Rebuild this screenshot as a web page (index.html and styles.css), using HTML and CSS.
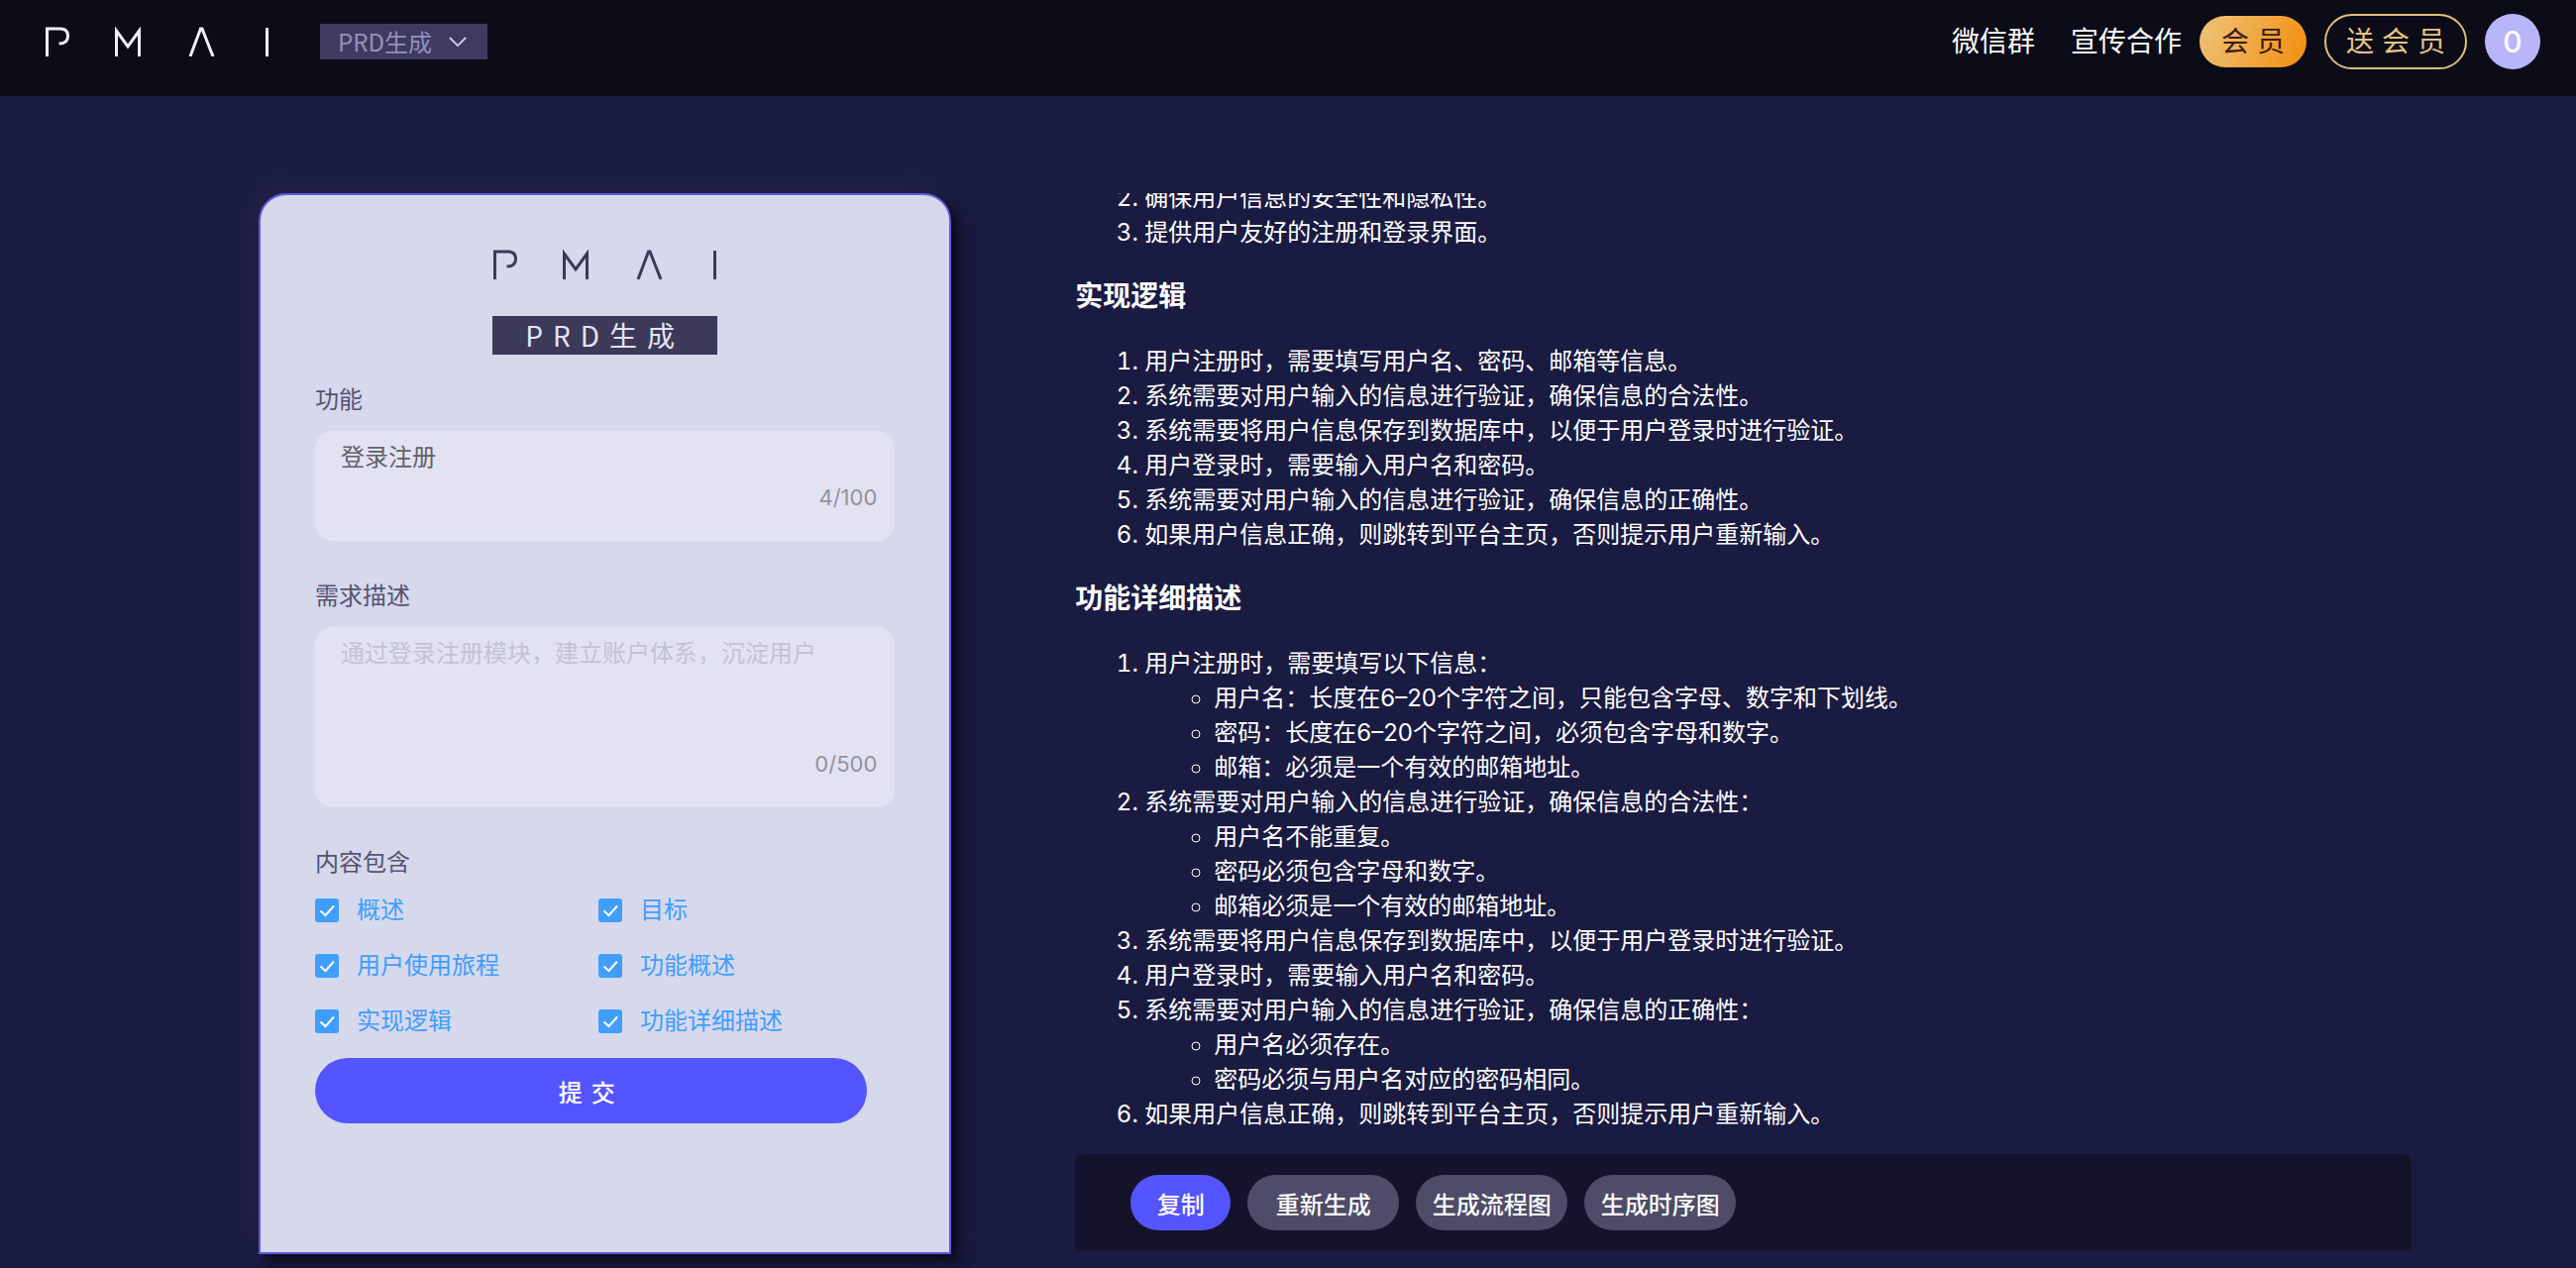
FILE: index.html
```html
<!DOCTYPE html>
<html lang="zh-CN">
<head>
<meta charset="utf-8">
<meta name="viewport" content="width=device-width, initial-scale=1">
<title>PMAI - PRD生成</title>
<link rel="stylesheet" href="styles.css">
</head>
<body>
<svg class="sprite" aria-hidden="true">
  <symbol id="logo" viewBox="0 0 226 30">
    <path d="M1.500 30V2H15C20 2 22.500 5 22.500 9.500C22.500 14.500 20 17 13.500 17M71.500 30V4L83 20L94.500 4V30M146 30L156.500 2H158L169 30M223.500 1V30" fill="none" stroke="currentColor" stroke-width="3"/>
  </symbol>
  <symbol id="tick" viewBox="0 0 24 24">
    <path d="M5.500 12.500L10.500 17L19 7.500" fill="none" stroke="currentColor" stroke-width="2"/>
  </symbol>
</svg>

<header class="topbar">
  <a class="brand" href="#" aria-label="PMAI"><svg class="logo"><use href="#logo"/></svg></a>
  <div class="mode">
    <select class="mode-select" aria-label="功能切换"><option>PRD生成</option></select>
    <svg class="mode-arrow" viewBox="0 0 20 12" aria-hidden="true"><path d="M1 1L10 10L19 1" fill="none" stroke="currentColor" stroke-width="2"/></svg>
  </div>
  <nav class="links">
    <a href="#">微信群</a>
    <a href="#">宣传合作</a>
  </nav>
  <button class="vip" type="button">会员</button>
  <button class="vip vip-gift" type="button">送会员</button>
  <button class="avatar" type="button">0</button>
</header>

<main class="workspace">
  <form class="card">
    <svg class="logo card-logo" role="img" aria-label="PMAI"><use href="#logo"/></svg>
    <h1 class="badge">PRD生成</h1>

    <label class="label" for="feature">功能</label>
    <div class="field">
      <textarea class="input" id="feature" maxlength="100">登录注册</textarea>
      <span class="counter">4/100</span>
    </div>

    <label class="label" for="need">需求描述</label>
    <div class="field field-tall">
      <textarea class="input" id="need" maxlength="500" placeholder="通过登录注册模块，建立账户体系，沉淀用户"></textarea>
      <span class="counter">0/500</span>
    </div>

    <fieldset class="options">
      <legend class="label">内容包含</legend>
      <div class="option-grid">
        <label class="option"><input type="checkbox" checked><svg><use href="#tick"/></svg><span>概述</span></label>
        <label class="option"><input type="checkbox" checked><svg><use href="#tick"/></svg><span>目标</span></label>
        <label class="option"><input type="checkbox" checked><svg><use href="#tick"/></svg><span>用户使用旅程</span></label>
        <label class="option"><input type="checkbox" checked><svg><use href="#tick"/></svg><span>功能概述</span></label>
        <label class="option"><input type="checkbox" checked><svg><use href="#tick"/></svg><span>实现逻辑</span></label>
        <label class="option"><input type="checkbox" checked><svg><use href="#tick"/></svg><span>功能详细描述</span></label>
      </div>
    </fieldset>
    <button class="submit" type="button">提交</button>
  </form>

  <section class="result">
    <article class="doc">
      <ol start="2">
        <li>确保用户信息的安全性和隐私性。</li>
        <li>提供用户友好的注册和登录界面。</li>
      </ol>
      <h2>实现逻辑</h2>
      <ol>
        <li>用户注册时，需要填写用户名、密码、邮箱等信息。</li>
        <li>系统需要对用户输入的信息进行验证，确保信息的合法性。</li>
        <li>系统需要将用户信息保存到数据库中，以便于用户登录时进行验证。</li>
        <li>用户登录时，需要输入用户名和密码。</li>
        <li>系统需要对用户输入的信息进行验证，确保信息的正确性。</li>
        <li>如果用户信息正确，则跳转到平台主页，否则提示用户重新输入。</li>
      </ol>
      <h2>功能详细描述</h2>
      <ol>
        <li>用户注册时，需要填写以下信息：
          <ul>
            <li>用户名：长度在6–20个字符之间，只能包含字母、数字和下划线。</li>
            <li>密码：长度在6–20个字符之间，必须包含字母和数字。</li>
            <li>邮箱：必须是一个有效的邮箱地址。</li>
          </ul>
        </li>
        <li>系统需要对用户输入的信息进行验证，确保信息的合法性：
          <ul>
            <li>用户名不能重复。</li>
            <li>密码必须包含字母和数字。</li>
            <li>邮箱必须是一个有效的邮箱地址。</li>
          </ul>
        </li>
        <li>系统需要将用户信息保存到数据库中，以便于用户登录时进行验证。</li>
        <li>用户登录时，需要输入用户名和密码。</li>
        <li>系统需要对用户输入的信息进行验证，确保信息的正确性：
          <ul>
            <li>用户名必须存在。</li>
            <li>密码必须与用户名对应的密码相同。</li>
          </ul>
        </li>
        <li>如果用户信息正确，则跳转到平台主页，否则提示用户重新输入。</li>
      </ol>
    </article>
    <div class="actions">
      <button class="action action-primary" type="button">复制</button>
      <button class="action" type="button">重新生成</button>
      <button class="action" type="button">生成流程图</button>
      <button class="action" type="button">生成时序图</button>
    </div>
  </section>
</main>
</body>
</html>
```

FILE: styles.css
```css
* {
  box-sizing: border-box;
}

body {
  margin: 0;
  height: 100vh;
  display: flex;
  flex-direction: column;
  background: #1a1b41;
  color: #fff;
  font-family: Inter, "Noto Sans CJK SC", sans-serif;
  font-size: 24px;
  overflow: hidden;
}

button,
select,
textarea {
  font: inherit;
  color: inherit;
  border: 0;
  margin: 0;
}

button {
  cursor: pointer;
  white-space: nowrap;
}

.sprite {
  position: absolute;
  width: 0;
  height: 0;
}

.logo {
  display: block;
  width: 226px;
  height: 30px;
}

/* top bar */

.topbar {
  flex: none;
  display: flex;
  align-items: center;
  gap: 18px;
  height: 97px;
  padding: 0 36px 13px 46px;
  background: #0c0b18;
}

.brand {
  color: #f0effc;
}

.mode {
  display: grid;
  align-items: center;
  margin-left: 33px;
  color: #9590bd;
}

.mode-select {
  grid-area: 1 / 1;
  appearance: none;
  width: 169px;
  height: 36px;
  padding: 0 18px;
  border-radius: 0;
  background: #3f3b5e;
  font-family: "Noto Sans CJK SC", sans-serif;
  line-height: 36px;
}

.mode-arrow {
  grid-area: 1 / 1;
  justify-self: end;
  width: 18px;
  height: 11px;
  margin-right: 21px;
  color: #d3d0ee;
  pointer-events: none;
}

.links {
  display: flex;
  gap: 36px;
  margin-left: auto;
  font-size: 28px;
  line-height: 40px;
}

.links a {
  color: #fff;
  text-decoration: none;
}

.vip {
  height: 52px;
  padding: 0 14px 0 22px;
  border-radius: 28px;
  background: linear-gradient(110deg, #edc47a, #f38d0e);
  color: #3b1a14;
  font-size: 28px;
  line-height: 40px;
  letter-spacing: 8px;
}

.vip-gift {
  height: 56px;
  padding: 0 12px 0 20px;
  border: 2px solid #dcc07c;
  background: none;
  color: #e3c583;
}

.avatar {
  width: 56px;
  height: 56px;
  padding: 0;
  border-radius: 50%;
  background: #b9b5fb;
  font-size: 30px;
  font-weight: 500;
  line-height: 40px;
}

/* two columns: form and result */

.workspace {
  flex: 1;
  min-height: 0;
  display: grid;
  grid-template-columns: minmax(0, 14fr) minmax(0, 27fr);
  grid-template-rows: minmax(0, 1fr);
  column-gap: 125px;
  padding: 98px 166px 14px 261px;
}

.card {
  display: flex;
  flex-direction: column;
  padding: 55px 55px 0;
  border: 2px solid #6359d8;
  border-radius: 28px 28px 0 0;
  background: #d6d8ec;
  box-shadow: 8px 8px 12px #0a0a1c, -8px -8px 32px #25244a;
  color: #55536f;
}

.card-logo {
  align-self: center;
  color: #3c3a58;
}

.badge {
  align-self: center;
  width: 227px;
  margin: 37px 0 32px;
  background: #3c3a58;
  color: #e4e2fa;
  font-family: "Noto Sans CJK SC", sans-serif;
  font-size: 28px;
  font-weight: 400;
  line-height: 39px;
  letter-spacing: 10px;
  text-align: center;
}

.label {
  padding: 0;
  line-height: 28px;
}

.field {
  position: relative;
  height: 111px;
  margin: 17px 0 42px;
}

.field-tall {
  height: 182px;
}

.input {
  display: block;
  width: 100%;
  height: 100%;
  padding: 10px 26px;
  border-radius: 18px;
  outline: 0;
  background: #e3e2f2;
  color: #606069;
  line-height: 34px;
  resize: none;
}

.input::placeholder {
  color: #c3c3cf;
  opacity: 1;
}

.counter {
  position: absolute;
  right: 18px;
  bottom: 30px;
  color: #92929c;
  font-size: 22px;
  line-height: 28px;
}

.options {
  margin: 0;
  padding: 0;
  border: 0;
}

.option-grid {
  display: grid;
  grid-template-columns: 286px 1fr;
  grid-auto-rows: 56px;
  margin-top: 6px;
}

.option {
  display: grid;
  grid-template-columns: 24px 1fr;
  align-items: center;
  column-gap: 18px;
  color: #409eff;
  line-height: 34px;
}

.option input {
  grid-area: 1 / 1;
  appearance: none;
  width: 24px;
  height: 24px;
  margin: 0;
  border-radius: 3px;
  background: #409eff;
}

.option svg {
  grid-area: 1 / 1;
  width: 24px;
  height: 24px;
  color: #fff;
  pointer-events: none;
}

.submit {
  height: 66px;
  margin: 9px 28px 0 0;
  border-radius: 33px;
  background: #5555ff;
  color: #fff;
  font-weight: 500;
  letter-spacing: 9px;
}

/* generated document */

.result {
  display: flex;
  flex-direction: column;
  padding-bottom: 3px;
}

.doc {
  flex: 1;
  min-height: 0;
  display: flex;
  flex-direction: column;
  justify-content: flex-end;
  padding-bottom: 23px;
  overflow: hidden;
  line-height: 35px;
}

.doc h2 {
  margin: 28px 0;
  font-size: 28px;
  font-weight: 700;
  line-height: 39px;
}

.doc ol,
.doc ul {
  margin: 0;
  padding-left: 70px;
}

.doc ul {
  list-style: circle;
}

.actions {
  flex: none;
  display: flex;
  gap: 17px;
  padding: 21px 56px;
  border-radius: 8px 8px 0 0;
  background: #14132b;
}

.action {
  min-width: 153px;
  height: 56px;
  padding: 0 16px;
  border-radius: 28px;
  background: #4e4c68;
  font-weight: 500;
}

.action-primary {
  min-width: 101px;
  background: #5555ff;
}
```
